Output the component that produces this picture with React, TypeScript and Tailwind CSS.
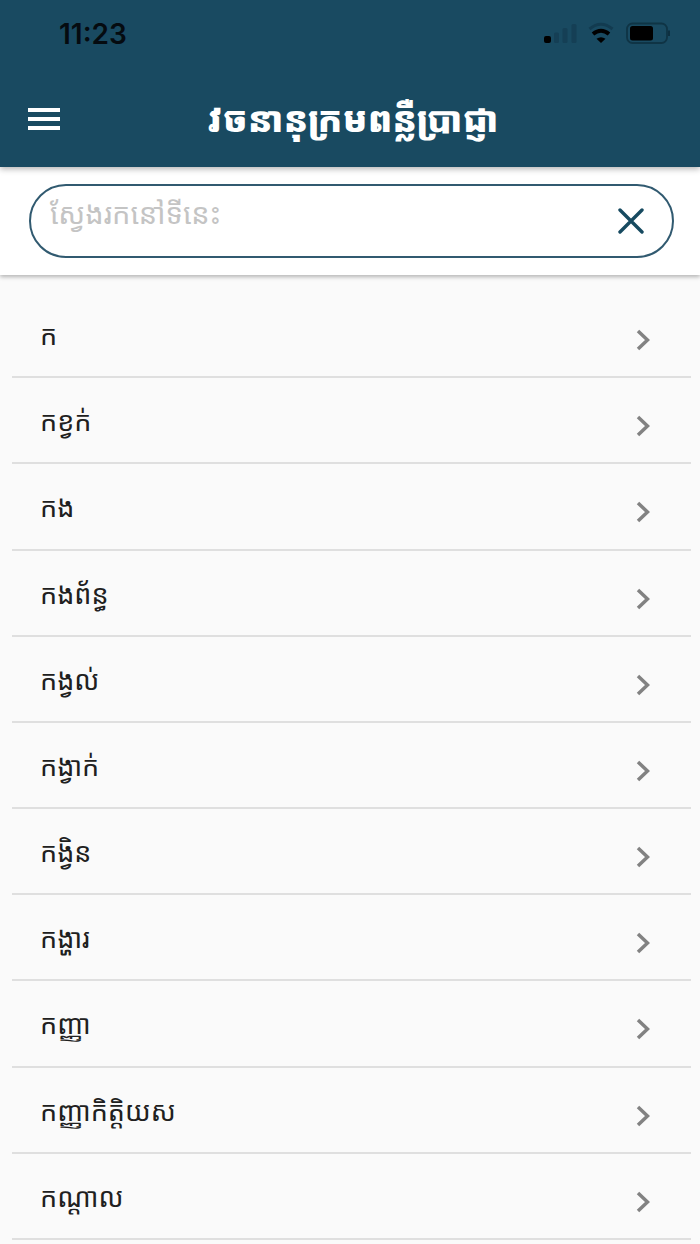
const words = [
  'ក',
  'កខ្វក់',
  'កង',
  'កងព័ន្ធ',
  'កង្វល់',
  'កង្វាក់',
  'កង្វិន',
  'កង្ហារ',
  'កញ្ញា',
  'កញ្ញាកិត្តិយស',
  'កណ្ដាល',
];

function StatusIcons() {
  return (
    <svg width="130" height="24" viewBox="0 0 130 24" className="mt-[22px] shrink-0">
      <rect x="4" y="14" width="7" height="7" rx="2" fill="#000" />
      <g fill="#153f55">
        <rect x="14" y="10.500" width="5" height="10.500" rx="1.500" />
        <rect x="22.500" y="6" width="5" height="15" rx="1.500" />
        <rect x="31.500" y="2" width="5" height="19" rx="1.500" />
      </g>
      <path d="M49.500 7Q61 -2.500 72.500 7" fill="none" stroke="#123b50" strokeWidth="3" />
      <path d="M53 12Q61 5.500 69 12" fill="none" stroke="#000" strokeWidth="4" />
      <path d="M56.500 16.800Q61 13.500 65.500 16.800L61 21Z" fill="#000" />
      <rect x="87" y="1.500" width="40" height="19.500" rx="5.500" fill="none" stroke="#0f3445" strokeWidth="1.800" />
      <rect x="90" y="4" width="23" height="14.500" rx="2.500" fill="#000" />
      <path d="M129 8.500v5.500" stroke="#0d2f40" strokeWidth="2" />
    </svg>
  );
}

export default function App() {
  return (
    <div className="flex h-[1244px] w-[700px] flex-col overflow-hidden bg-[#fafafa] font-['Noto_Sans_Khmer','Noto_Sans',sans-serif]">
      <header className="relative z-20 flex h-[167px] shrink-0 flex-col bg-[#194a61] shadow-[0_2px_6px_rgba(0,0,0,0.3)]">
        <div className="flex h-[72px] justify-between pr-[30px] pl-[59px]">
          <span className="pt-[16px] font-['Inter'] text-[28px] leading-[36px] font-semibold text-[#050b10]">11:23</span>
          <StatusIcons />
        </div>
        <div className="flex h-[95px] items-center">
          <div className="mb-[1px] ml-[28px] flex w-[32px] shrink-0 flex-col gap-[5px]">
            <span className="h-[4px] bg-white" />
            <span className="h-[4px] bg-white" />
            <span className="h-[4px] bg-white" />
          </div>
          <h1 className="mb-[4px] ml-[147px] text-[35.300px] leading-[60px] font-black whitespace-nowrap text-white">វចនានុក្រមពន្លឺប្រាជ្ញា</h1>
        </div>
      </header>

      <section className="relative z-10 h-[108px] shrink-0 bg-white pt-[17px] pr-[26px] pl-[29px] shadow-[0_2px_4px_rgba(0,0,0,0.28)]">
        <div className="flex h-[74px] items-center justify-between rounded-full border-2 border-[#315a70] pr-[28px] pl-[19px]">
          <span className="pb-[16px] text-[29px] leading-[50px] whitespace-nowrap text-[#c4c4c4]">ស្វែងរកនៅទីនេះ</span>
          <svg width="26" height="26" viewBox="0 0 26 26" fill="none" stroke="#174a60" strokeWidth="3.400" strokeLinecap="round">
            <path d="M2 2l22 22M24 2l-22 22" />
          </svg>
        </div>
      </section>

      <main className="flex shrink-0 flex-col pt-[17px] pr-[9px] pl-[12px]">
        {words.map((word) => (
          <div key={word} className="flex h-[86.180px] shrink-0 items-center justify-between border-b-2 border-[#dfdfdf] pr-[41px] pl-[28px]">
            <span className="pt-[2px] text-[27px] leading-[50px] whitespace-nowrap text-[#202020]">{word}</span>
            <svg width="14" height="22" viewBox="0 0 14 22" fill="none" stroke="#828282" strokeWidth="3.500" className="mt-[12px]">
              <path d="M2 2L11.500 11L2 20" />
            </svg>
          </div>
        ))}
      </main>
    </div>
  );
}
